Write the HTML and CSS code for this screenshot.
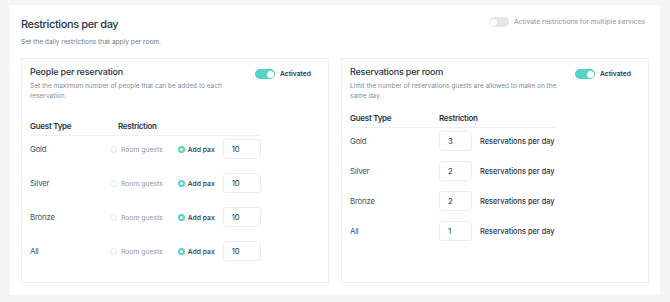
FILE: index.html
```html
<!DOCTYPE html>
<html lang="en">
<head>
<meta charset="utf-8">
<title>Restrictions per day</title>
<link rel="stylesheet" href="styles.css">
</head>
<body>
<main class="panel">
  <header class="panel-head">
    <div class="panel-titles">
      <h1 class="panel-title">Restrictions per day</h1>
      <p class="panel-sub">Set the daily restrictions that apply per room.</p>
    </div>
    <label class="multi">
      <span class="toggle toggle-off"><span class="knob"></span></span>
      <span class="multi-text">Activate restrictions for multiple services</span>
    </label>
  </header>

  <div class="cards">
    <section class="card card-left">
      <div class="card-head">
        <div class="card-titles">
          <h2 class="card-title">People per reservation</h2>
          <p class="card-desc">Set the maximum number of people that can be added to each reservation.</p>
        </div>
        <div class="activated">
          <span class="toggle toggle-on"><span class="knob"></span></span>
          <span class="act-text">Activated</span>
        </div>
      </div>
      <div class="table table-left">
        <div class="thead">
          <span class="th th-type">Guest Type</span>
          <span class="th">Restriction</span>
        </div>
        <div class="row">
          <span class="gname">Gold</span>
          <span class="radio"><span class="dot"></span>Room guests</span>
          <span class="radio radio-on"><span class="dot"></span>Add pax</span>
          <span class="inp inp-wide">10</span>
        </div>
        <div class="row">
          <span class="gname">Silver</span>
          <span class="radio"><span class="dot"></span>Room guests</span>
          <span class="radio radio-on"><span class="dot"></span>Add pax</span>
          <span class="inp inp-wide">10</span>
        </div>
        <div class="row">
          <span class="gname">Bronze</span>
          <span class="radio"><span class="dot"></span>Room guests</span>
          <span class="radio radio-on"><span class="dot"></span>Add pax</span>
          <span class="inp inp-wide">10</span>
        </div>
        <div class="row">
          <span class="gname">All</span>
          <span class="radio"><span class="dot"></span>Room guests</span>
          <span class="radio radio-on"><span class="dot"></span>Add pax</span>
          <span class="inp inp-wide">10</span>
        </div>
      </div>
    </section>

    <section class="card card-right">
      <div class="card-head">
        <div class="card-titles">
          <h2 class="card-title">Reservations per room</h2>
          <p class="card-desc">Limit the number of reservations guests are allowed to make on the same day.</p>
        </div>
        <div class="activated">
          <span class="toggle toggle-on"><span class="knob"></span></span>
          <span class="act-text">Activated</span>
        </div>
      </div>
      <div class="table table-right">
        <div class="thead">
          <span class="th th-type2">Guest Type</span>
          <span class="th">Restriction</span>
        </div>
        <div class="row row2">
          <span class="gname gname2">Gold</span>
          <span class="inp inp-narrow">3</span>
          <span class="per">Reservations per day</span>
        </div>
        <div class="row row2">
          <span class="gname gname2">Silver</span>
          <span class="inp inp-narrow">2</span>
          <span class="per">Reservations per day</span>
        </div>
        <div class="row row2">
          <span class="gname gname2">Bronze</span>
          <span class="inp inp-narrow">2</span>
          <span class="per">Reservations per day</span>
        </div>
        <div class="row row2">
          <span class="gname gname2">All</span>
          <span class="inp inp-narrow">1</span>
          <span class="per">Reservations per day</span>
        </div>
      </div>
    </section>
  </div>
</main>
</body>
</html>
```

FILE: styles.css
```css
* { box-sizing: border-box; }
html, body { margin: 0; padding: 0; }
body {
  background: #f4f5f7;
  font-family: Inter, "Noto Sans", sans-serif;
  color: #2d3748;
  width: 670px;
  height: 302px;
  overflow: hidden;
  padding: 5px 10px 0 10px;
}
.panel {
  background: #ffffff;
  height: 290px;
  padding: 12px 11px 12px 11px;
  display: flex;
  flex-direction: column;
}
.panel-head {
  display: flex;
  justify-content: space-between;
  align-items: flex-start;
}
.panel-title {
  margin: 0;
  font-size: 11px;
  letter-spacing: -0.38px;
  font-weight: 500;
  line-height: 14px;
  color: #2b3445;
}
.panel-sub {
  margin: 6px 0 0 0;
  font-size: 6.6px;
  line-height: 10px;
  color: #737a87;
}
.multi {
  display: flex;
  align-items: center;
  gap: 5px;
  margin-top: 0;
  margin-right: 4px;
}
.multi-text {
  font-size: 6.7px;
  line-height: 10px;
  color: #9ca2ad;
  font-weight: 500;
}
.toggle {
  position: relative;
  display: inline-block;
  width: 20px;
  height: 10px;
  border-radius: 5px;
  flex: none;
}
.toggle-on { background: #55d3c4; }
.toggle-off { background: #e3e6eb; }
.knob {
  position: absolute;
  top: 1.5px;
  width: 7px;
  height: 7px;
  border-radius: 50%;
  background: #ffffff;
}
.toggle-on .knob { right: 1.5px; }
.toggle-off .knob { left: 1.5px; }

.cards {
  display: flex;
  gap: 12px;
  margin-top: 11px;
  flex: 1;
}
.card {
  flex: 1;
  border: 1px solid #eceef1;
  padding: 7px 8px 8px 8px;
}
.card-head {
  display: flex;
  justify-content: space-between;
  align-items: flex-start;
}
.card-titles { width: 214px; }
.card-title {
  margin: 0;
  font-size: 9px;
  letter-spacing: -0.2px;
  font-weight: 500;
  line-height: 12px;
  color: #2b3445;
}
.card-desc {
  margin: 3px 0 0 0;
  font-size: 6.5px;
  line-height: 10px;
  color: #838a97;
}
.activated {
  display: flex;
  align-items: center;
  gap: 5px;
  margin-top: 3px;
  margin-right: 9px;
}
.act-text {
  font-size: 6.7px;
  line-height: 10px;
  font-weight: 600;
  color: #2b3445;
}

.table-left { margin-top: 20px; }
.table-right { margin-top: 12px; }
.thead {
  display: flex;
  border-bottom: 1px solid #eef0f2;
  height: 15px;
  width: 230px;
  align-items: flex-start;
}
.table-right .thead { width: 207px; }
.th {
  font-size: 8px;
  letter-spacing: -0.28px;
  font-weight: 600;
  line-height: 10px;
  color: #2b3445;
  white-space: nowrap;
}
.th-type { width: 88px; }
.th-type2 { width: 89px; }
.row {
  display: flex;
  align-items: center;
  height: 20px;
  margin-top: 14px;
  white-space: nowrap;
}
.thead + .row { margin-top: 3px; }
.row2 { margin-top: 10px; }
.gname {
  width: 80px;
  flex: none;
  font-size: 7.9px;
  letter-spacing: -0.25px;
  color: #4a5263;
}
.gname2 { width: 89px; }
.radio {
  display: flex;
  align-items: center;
  gap: 4px;
  flex: none;
  font-size: 6.8px;
  color: #9299a5;
  margin-right: 15px;
}
.radio-on {
  gap: 3px;
  color: #2b3445;
  font-weight: 500;
  margin-right: 8px;
}
.dot {
  width: 7px;
  height: 7px;
  flex: none;
  border-radius: 50%;
  border: 1px solid #e6e8ec;
}
.radio-on .dot {
  border: 2.2px solid #55d3c4;
  background: #ffffff;
}
.inp {
  height: 20px;
  flex: none;
  border: 1px solid #eceef1;
  border-radius: 3px;
  font-size: 7.8px;
  color: #2b3445;
  display: flex;
  align-items: center;
  padding-left: 8px;
}
.inp-wide { width: 38px; }
.inp-narrow { width: 33px; }
.per {
  margin-left: 8px;
  font-size: 7.4px;
  font-weight: 500;
  color: #2b3445;
}
```
